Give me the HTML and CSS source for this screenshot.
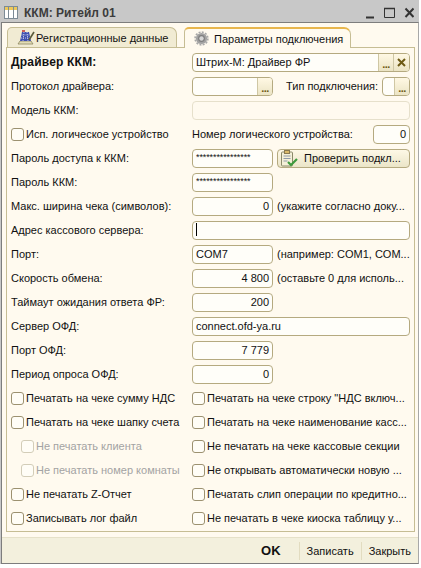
FILE: index.html
```html
<!DOCTYPE html>
<html lang="ru">
<head>
<meta charset="utf-8">
<title>ККМ: Ритейл 01</title>
<link rel="stylesheet" href="styles.css">
</head>
<body>
<div class="window">
  <header class="titlebar">
    <svg class="title-icon" width="14" height="14" viewBox="0 0 14 14"><rect x=".5" y=".5" width="13" height="12" fill="#fff" stroke="#7d8b96"/><path d="M1 2.500h12" stroke="#eec95a" stroke-width="3"/><path d="M4.500 1v11M9.500 1v11" stroke="#7d8b96"/></svg>
    <span class="title-text">ККМ: Ритейл 01</span>
    <span class="win-btns">
      <svg width="62" height="14" viewBox="0 0 62 14"><path d="M14 11.500h8" stroke="#333" stroke-width="2"/><path d="M32.500 2.500h10v9h-10z" fill="none" stroke="#333"/><path d="M32 2.500h11" stroke="#333" stroke-width="1.500"/><path d="M53.500 2.500l8 8.500M61.500 2.500l-8 8.500" stroke="#333" stroke-width="2"/></svg>
    </span>
  </header>
  <div class="frame">
    <nav class="tabs">
      <div class="tab">
        <svg width="18" height="17" viewBox="0 0 18 17"><path d="M1 15l2-3h11l2 3z" fill="#e2dcb6" stroke="#8d8660" stroke-width=".8"/><path d="M5 3h7l2 9H3z" fill="#3f4fb0"/><path d="M4.500 6h8M4 9h9M7 3l-1 9M10 3l1 9" stroke="#e4e4f2" stroke-width=".8" stroke-dasharray="1 1"/><path d="M5 2h3" stroke="#c03030" stroke-width="1.500"/><path d="M12 11l5-8" stroke="#5a5a3a" stroke-width="1.600"/></svg>
        <span>Регистрационные данные</span>
      </div>
      <div class="tab tab-active">
        <svg width="15" height="15" viewBox="0 0 15 15"><circle cx="7.500" cy="7.500" r="5.600" fill="#a2a2a2"/><circle cx="7.500" cy="7.500" r="6.400" fill="none" stroke="#a8a8a8" stroke-width="1.600" stroke-dasharray="2 1.300"/><circle cx="7.500" cy="7.500" r="3.400" fill="#7e7e7e"/><circle cx="7.500" cy="7.500" r="2.200" fill="#d6d6d6"/></svg>
        <span>Параметры подключения</span>
      </div>
    </nav>
    <main class="panel">
      <div class="row"><label class="lbl bold">Драйвер ККМ:</label><div class="field grow"><span class="val">Штрих-М: Драйвер ФР</span><span class="fbtn">...</span><span class="fbtn x"><svg width="9" height="9" viewBox="0 0 9 9"><path d="M1 1l7 7M8 1L1 8" stroke="#6d5a14" stroke-width="2"/></svg></span></div></div>
      <div class="row"><label class="lbl">Протокол драйвера:</label><div class="field w80"><span class="val"></span><span class="fbtn">...</span></div><label class="type-lbl">Тип подключения:</label><div class="field grow"><span class="val"></span><span class="fbtn">...</span></div></div>
      <div class="row"><label class="lbl">Модель ККМ:</label><div class="field grow disabled"></div></div>
      <div class="row"><label class="lbl chk"><i class="box"></i>Исп. логическое устройство</label><label class="num-lbl">Номер логического устройства:</label><div class="field grow right"><span class="val">0</span></div></div>
      <div class="row"><label class="lbl">Пароль доступа к ККМ:</label><div class="field w80"><span class="val pwd">****************</span></div>
        <div class="button">
          <svg width="18" height="17" viewBox="0 0 18 17"><rect x="1.500" y="2" width="11" height="14" rx="1" fill="#f4f0d8" stroke="#8a8a6a"/><rect x="4.500" y="0.500" width="5" height="3" fill="#d9b96a" stroke="#8a7a50"/><path d="M3.500 6h7M3.500 8.500h7M3.500 11h4" stroke="#8f9aa8"/><path d="M8 12l3 3 6-6" fill="none" stroke="#3d9a3d" stroke-width="2.200"/></svg>
          <span>Проверить подкл...</span>
        </div>
      </div>
      <div class="row"><label class="lbl">Пароль ККМ:</label><div class="field w80"><span class="val pwd">****************</span></div></div>
      <div class="row"><label class="lbl">Макс. ширина чека (символов):</label><div class="field w80 right"><span class="val">0</span></div><span class="note">(укажите согласно доку...</span></div>
      <div class="row"><label class="lbl">Адрес кассового сервера:</label><div class="field grow"><span class="val"><i class="caret"></i></span></div></div>
      <div class="row"><label class="lbl">Порт:</label><div class="field w80"><span class="val">COM7</span></div><span class="note">(например: COM1, COM...</span></div>
      <div class="row"><label class="lbl">Скорость обмена:</label><div class="field w80 right"><span class="val">4 800</span></div><span class="note">(оставьте 0 для исполь...</span></div>
      <div class="row"><label class="lbl">Таймаут ожидания ответа ФР:</label><div class="field w80 right"><span class="val">200</span></div></div>
      <div class="row"><label class="lbl">Сервер ОФД:</label><div class="field grow"><span class="val">connect.ofd-ya.ru</span></div></div>
      <div class="row"><label class="lbl">Порт ОФД:</label><div class="field w80 right"><span class="val">7 779</span></div></div>
      <div class="row"><label class="lbl">Период опроса ОФД:</label><div class="field w80 right"><span class="val">0</span></div></div>
      <div class="row"><label class="lbl chk"><i class="box"></i>Печатать на чеке сумму НДС</label><label class="chk"><i class="box"></i>Печатать на чеке строку "НДС включ...</label></div>
      <div class="row"><label class="lbl chk"><i class="box"></i>Печатать на чеке шапку счета</label><label class="chk"><i class="box"></i>Печатать на чеке наименование касс...</label></div>
      <div class="row"><label class="lbl chk sub"><i class="box"></i>Не печатать клиента</label><label class="chk"><i class="box"></i>Не печатать на чеке кассовые секции</label></div>
      <div class="row"><label class="lbl chk sub"><i class="box"></i>Не печатать номер комнаты</label><label class="chk"><i class="box"></i>Не открывать автоматически новую ...</label></div>
      <div class="row"><label class="lbl chk"><i class="box"></i>Не печатать Z-Отчет</label><label class="chk"><i class="box"></i>Печатать слип операции по кредитно...</label></div>
      <div class="row"><label class="lbl chk"><i class="box"></i>Записывать лог файл</label><label class="chk"><i class="box"></i>Не печатать в чеке киоска таблицу у...</label></div>
    </main>
    <footer class="footer">
      <span class="act ok">OK</span><span class="act">Записать</span><span class="act">Закрыть</span>
    </footer>
  </div>
</div>
</body>
</html>
```
FILE: styles.css
```css
* { box-sizing: border-box; }
html, body { margin: 0; padding: 0; }
body { width: 421px; height: 568px; overflow: hidden; background: #fff; font: 11px/14px "Liberation Sans", Arial, sans-serif; color: #111; }
.window { width: 419px; height: 564px; background: #c8c8c8; display: flex; flex-direction: column; }
.titlebar { height: 22px; flex: none; display: flex; align-items: center; padding: 4px 5px 0 4px; gap: 6px; }
.title-text { font-weight: bold; font-size: 12px; color: #3c3c3c; }
.win-btns { margin-left: auto; display: flex; }
.frame { flex: 1; margin-left: 1px; border: 1px solid #7d7d7d; border-right-color: #a8a8a8; background: #fffaef; display: flex; flex-direction: column; padding: 4px 3px 0 4px; min-height: 0; }
.tabs { display: flex; height: 20px; flex: none; padding-left: 1px; gap: 7px; position: relative; z-index: 1; }
.tab { height: 20px; padding-left: 9px; width: 170px; display: flex; align-items: center; gap: 1px; background: #f1ebd3; border: 1px solid #c6bd94; border-bottom: none; border-radius: 5px 7px 0 0; white-space: nowrap; }
.tab svg { flex: none; }
.tab-active { width: 167px; height: 21px; background: #fffaef; border-top: 2px solid #e8b64c; gap: 5px; }
.panel { flex: none; height: 485px; border: 1px solid #c6bd94; padding: 2px 4px 0 4px; display: flex; flex-direction: column; }
.row { height: 24px; flex: none; display: flex; align-items: center; white-space: nowrap; }
.lbl { width: 181px; flex: none; }
.bold { font-weight: bold; font-size: 12px; letter-spacing: .2px; }
.chk { display: flex; align-items: center; gap: 2px; }
.sub { padding-left: 10px; color: #a3a3a3; }
.box { width: 13px; height: 13px; flex: none; border: 1px solid #9c9170; border-radius: 3px; background: #fffdf6; }
.sub .box { border-color: #d3cdb8; }
.field { height: 19px; display: flex; border: 1px solid #b5aa80; border-radius: 4px; background: #fffef9; overflow: hidden; }
.grow { flex: 1; }
.w80 { width: 81px; flex: none; }
.val { flex: 1; padding: 0 3px; line-height: 17px; min-width: 0; }
.right .val { text-align: right; }
.pwd { font-size: 9px; letter-spacing: -.1px; line-height: 15px; }
.disabled { background: #fffaef; border-color: #e6e0cb; }
.fbtn { width: 15px; flex: none; background: linear-gradient(#fff8e4, #ebe4c4); border-left: 1px solid #cfc7a4; text-align: center; font-weight: bold; color: #6d5a14; line-height: 20px; font-size: 11px; letter-spacing: -.5px; }
.x { width: 16px; display: flex; align-items: center; justify-content: center; }
.type-lbl { margin-left: 13px; width: 96px; flex: none; }
.num-lbl { width: 181px; flex: none; }
.note { margin-left: 4px; }
.caret { display: inline-block; width: 1px; height: 13px; background: #000; vertical-align: -2px; }
.button { margin-left: 4px; flex: 1; height: 19px; display: flex; align-items: center; gap: 6px; padding-left: 2px; background: linear-gradient(#fdf8e6, #ebe5c8); border: 1px solid #b5aa80; border-radius: 4px; }
.footer { flex: 1; margin: 5px -3px 0 -4px; background: #f3f0dd; border-top: 1px solid #e6e1c9; display: flex; justify-content: flex-end; align-items: center; }
.act { padding: 0 7px; border-left: 1px solid #e2dcc0; line-height: 18px; }
.ok { border-left: none; font-weight: bold; font-size: 13px; padding: 0 18px 0 0; }
```
